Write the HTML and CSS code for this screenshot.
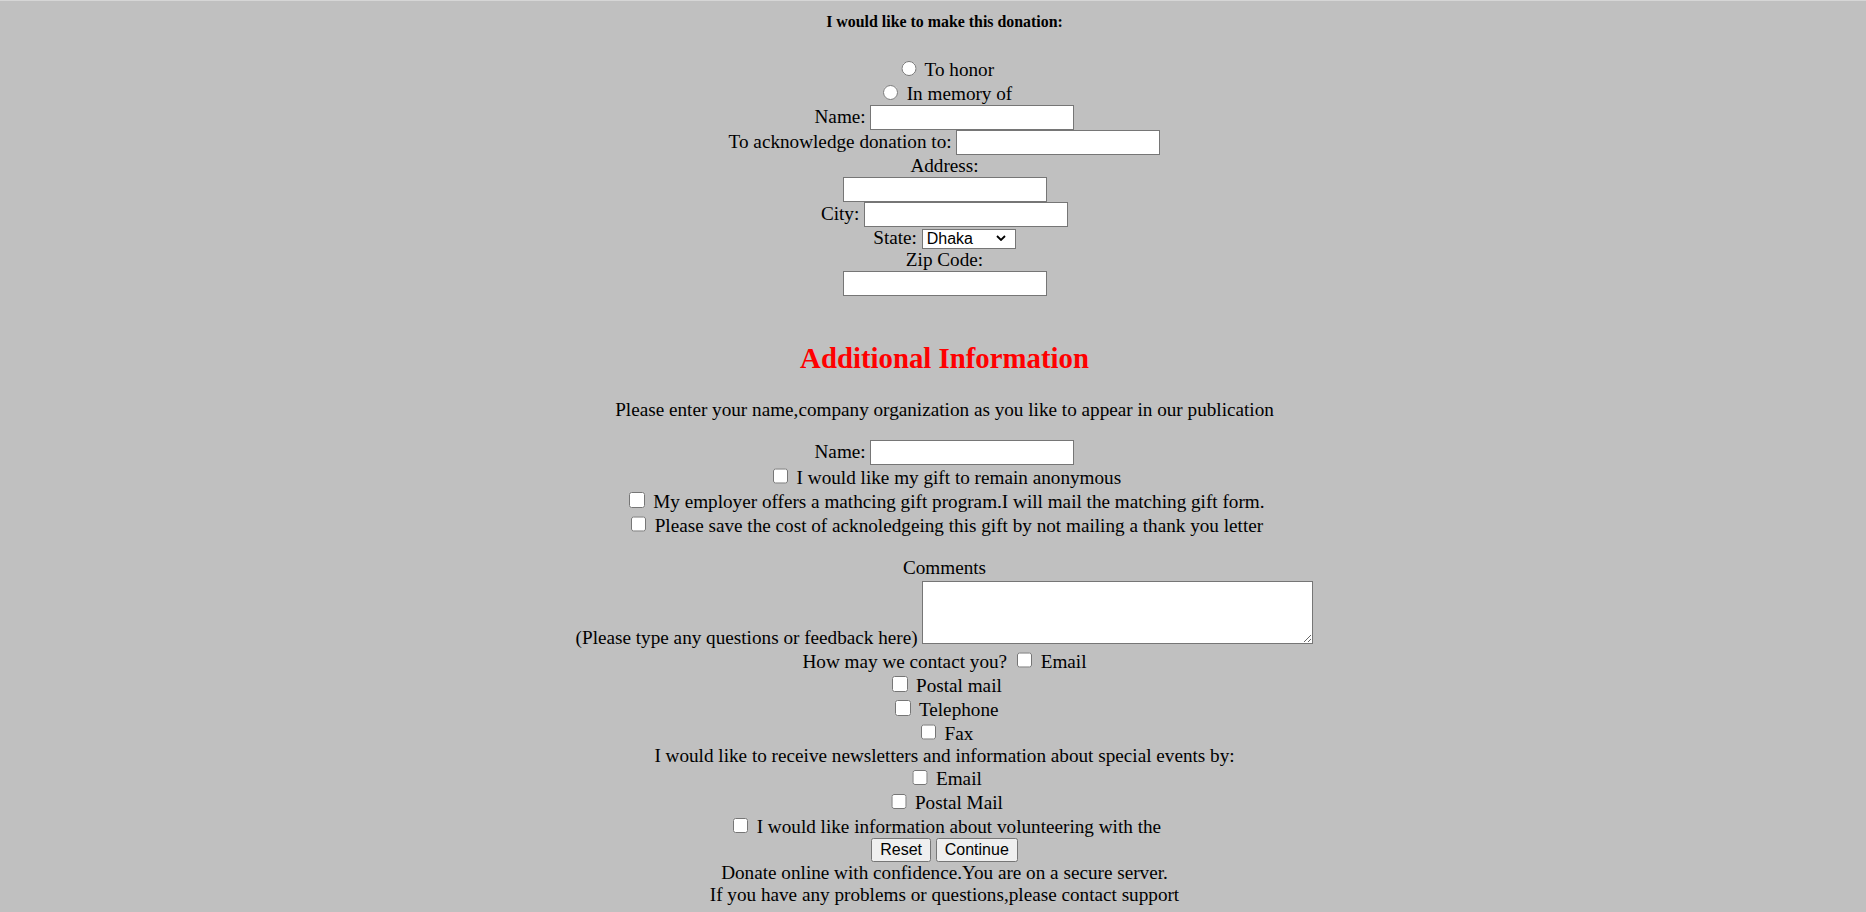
FILE: index.html
```html
<!DOCTYPE html>
<html lang="en">
<head>
<meta charset="utf-8">
<title>Donation</title>
<link rel="stylesheet" href="styles.css">
</head>
<body>
<form class="donate">
  <h5 class="lead">I would like to make this donation:</h5>
  <div class="rows">
    <label><input class="radio" type="radio" name="kind"> To honor</label><br>
    <label><input class="radio" type="radio" name="kind"> In memory of</label><br>
    Name: <input class="field" type="text"><br>
    To acknowledge donation to: <input class="field" type="text"><br>
    Address:<br>
    <input class="field" type="text"><br>
    City: <input class="field" type="text"><br>
    State: <span class="state"><select class="state-select"><option>Dhaka</option><option>Chittagong</option><option>Khulna</option></select><svg class="chevron" width="10" height="6" viewBox="0 0 10 6"><path d="M1 1 L5 5 L9 1" fill="none" stroke="#000" stroke-width="1.8"/></svg></span><br>
    Zip Code:<br>
    <input class="field" type="text">
  </div>

  <h2 class="section-title">Additional Information</h2>
  <p class="note">Please enter your name,company organization as you like to appear in our publication</p>

  <div class="rows">
    Name: <input class="field" type="text"><br>
    <label><input class="check" type="checkbox"> I would like my gift to remain anonymous</label><br>
    <label><input class="check" type="checkbox"> My employer offers a mathcing gift program.I will mail the matching gift form.</label><br>
    <label><input class="check" type="checkbox"> Please save the cost of acknoledgeing this gift by not mailing a thank you letter</label>
  </div>

  <div class="rows comments">
    Comments<br>
    (Please type any questions or feedback here) <textarea class="comment-box"></textarea><br>
    How may we contact you? <label><input class="check" type="checkbox"> Email</label><br>
    <label><input class="check" type="checkbox"> Postal mail</label><br>
    <label><input class="check" type="checkbox"> Telephone</label><br>
    <label><input class="check" type="checkbox"> Fax</label><br>
    I would like to receive newsletters and information about special events by:<br>
    <label><input class="check" type="checkbox"> Email</label><br>
    <label><input class="check" type="checkbox"> Postal Mail</label><br>
    <label><input class="check" type="checkbox"> I would like information about volunteering with the</label><br>
    <input class="btn" type="reset" value="Reset"> <input class="btn" type="submit" value="Continue"><br>
    Donate online with confidence.You are on a secure server.<br>
    If you have any problems or questions,please contact support
  </div>
</form>
</body>
</html>
```

FILE: styles.css
```css
html {
  background: #c0c0c0;
  border-top: 1px solid #d6d6d6;
}

body {
  margin: 0;
  font-family: "Liberation Serif", "Times New Roman", serif;
  font-size: 19.2px;
  color: #000;
}

.donate {
  margin: 0;
  padding: 0 9.6px 0 32.6px;
  text-align: center;
}

.lead {
  font-size: 15.9px;
  font-weight: bold;
  margin: 12.4px 0 25.7px;
}

.rows {
  margin: 0;
}

.section-title {
  font-size: 28.8px;
  font-weight: bold;
  color: #ff0000;
  margin: 45.3px 0 23.9px;
}

.note {
  margin: 0 0 19.4px;
}

.comments {
  margin-top: 20.5px;
}

.field {
  box-sizing: border-box;
  width: 204px;
  height: 25px;
  margin: 0;
  padding: 1px 2px;
  border: 1px solid #767676;
  border-radius: 0;
  background: #fff;
  font-family: "Liberation Sans", Arial, sans-serif;
  font-size: 16px;
  color: #000;
}

.radio {
  width: 15.6px;
  height: 15.6px;
  margin: 3.6px 3.6px 0 6px;
}

.check {
  width: 15.6px;
  height: 15.6px;
  margin: 3.3px 3.6px 3.6px 4.8px;
}

.state {
  position: relative;
  display: inline-block;
}

.state-select {
  -webkit-appearance: none;
  appearance: none;
  box-sizing: border-box;
  width: 94px;
  height: 20.4px;
  margin: 0;
  padding: 0 0 0 4px;
  border: 1px solid #767676;
  border-radius: 0;
  background: #fff;
  font-family: "Liberation Sans", Arial, sans-serif;
  font-size: 16px;
  color: #000;
}

.chevron {
  position: absolute;
  right: 10px;
  top: 7.5px;
  pointer-events: none;
}

.comment-box {
  box-sizing: border-box;
  width: 391px;
  height: 63px;
  margin: 1.8px 0 0;
  border: 1px solid #767676;
  background: #fff;
  font-family: "Liberation Mono", monospace;
  font-size: 16px;
}

.btn {
  box-sizing: border-box;
  height: 23.7px;
  margin: 0;
  padding: 1px 8px;
  border: 1px solid #767676;
  border-radius: 2.4px;
  background: #efefef;
  font-family: "Liberation Sans", Arial, sans-serif;
  font-size: 16px;
  color: #000;
}
```
